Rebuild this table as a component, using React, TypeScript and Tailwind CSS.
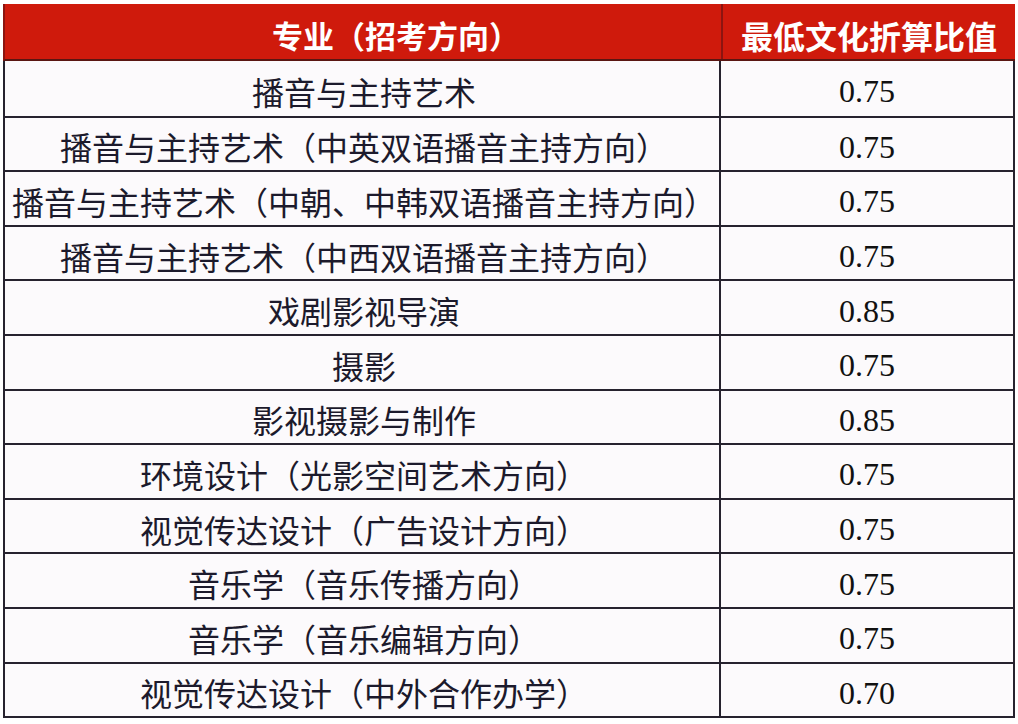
const rows: [string, string][] = [
  ["播音与主持艺术", "0.75"],
  ["播音与主持艺术（中英双语播音主持方向）", "0.75"],
  ["播音与主持艺术（中朝、中韩双语播音主持方向）", "0.75"],
  ["播音与主持艺术（中西双语播音主持方向）", "0.75"],
  ["戏剧影视导演", "0.85"],
  ["摄影", "0.75"],
  ["影视摄影与制作", "0.85"],
  ["环境设计（光影空间艺术方向）", "0.75"],
  ["视觉传达设计（广告设计方向）", "0.75"],
  ["音乐学（音乐传播方向）", "0.75"],
  ["音乐学（音乐编辑方向）", "0.75"],
  ["视觉传达设计（中外合作办学）", "0.70"],
];

export default function App() {
  return (
    <div className="w-[1018px] h-[724px] bg-white pt-[4px] pl-[3px] overflow-hidden">
      <div className="w-[1012px] font-['Noto_Sans_CJK_SC',sans-serif]">
        <div className="flex h-[57px] bg-[#cf1a0c] border-l-2 border-[#8c1410] border-b-2 border-b-[#5a1612]">
          <div className="w-[718px] flex items-center justify-center pl-[66px] pt-[6px] border-r-2 border-[#8c1410] text-[31px] font-bold text-white leading-none">
            专业（招考方向）
          </div>
          <div className="flex-1 flex items-center justify-center pt-[6px] text-[32px] font-bold text-white leading-none">
            最低文化折算比值
          </div>
        </div>
        <div className="border-l-2 border-r-2 border-b-2 border-[#26222e] bg-[#fcfafc]">
          {rows.map(([name, value], i) => (
            <div
              key={i}
              className={`flex h-[54.6px] ${i > 0 ? "border-t-2 border-[#26222e]" : ""}`}
            >
              <div className="w-[716px] flex items-center justify-center pt-[5px] pl-[4px] border-r-2 border-[#26222e] text-[32px] text-[#1c1a2c] leading-none whitespace-nowrap">
                {name}
              </div>
              <div className="flex-1 flex items-center justify-center pt-[6px] font-['Liberation_Serif',serif] text-[32px] text-[#111] leading-none">
                {value}
              </div>
            </div>
          ))}
        </div>
      </div>
    </div>
  );
}
